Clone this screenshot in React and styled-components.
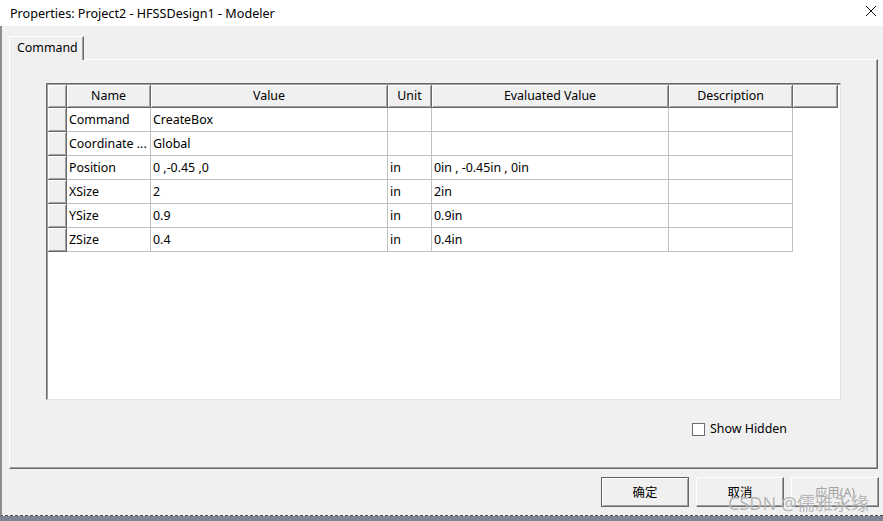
import React from 'react';
import styled, { createGlobalStyle } from 'styled-components';

const GlobalStyle = createGlobalStyle`
  html, body {
    margin: 0;
    padding: 0;
    background: #7d8594;
  }
  body {
    font-family: "Noto Sans", "Noto Sans CJK SC", sans-serif;
    font-size: 12.4px;
    color: #000;
  }
`;

const COLS = [19, 84, 237, 44, 237, 124];

const HEADERS = ['', 'Name', 'Value', 'Unit', 'Evaluated Value', 'Description'];

const ROWS = [
  ['Command', 'CreateBox', '', ''],
  ['Coordinate ...', 'Global', '', ''],
  ['Position', '0 ,-0.45 ,0', 'in', '0in , -0.45in , 0in'],
  ['XSize', '2', 'in', '2in'],
  ['YSize', '0.9', 'in', '0.9in'],
  ['ZSize', '0.4', 'in', '0.4in'],
];

const App = () => {
  return (
    <>
      <GlobalStyle />
      <Window>
        <TitleBar>
          <Title>Properties: Project2 - HFSSDesign1 - Modeler</Title>
          <CloseButton>
            <svg width="12" height="12" viewBox="0 0 12 12">
              <path d="M1 1 L11 11 M11 1 L1 11" stroke="#111" strokeWidth="1" fill="none" />
            </svg>
          </CloseButton>
        </TitleBar>
        <Body>
          <TabStrip>
            <Tab>Command</Tab>
          </TabStrip>
          <Panel>
            <Grid>
              <HeaderRow>
                {HEADERS.map((h, i) => (
                  <HeaderCell key={i} $w={COLS[i]}>{h}</HeaderCell>
                ))}
                <HeaderCell $w={45} />
              </HeaderRow>
              {ROWS.map((r, i) => (
                <Row key={i}>
                  <SelectorCell $w={COLS[0]} />
                  {r.map((v, j) => (
                    <Cell key={j} $w={COLS[j + 1]}>{v}</Cell>
                  ))}
                  <Cell $w={COLS[5]} />
                </Row>
              ))}
            </Grid>
            <OptionsRow>
              <CheckBox />
              <CheckLabel>Show Hidden</CheckLabel>
            </OptionsRow>
          </Panel>
          <ButtonRow>
            <Button $default>确定</Button>
            <Button>取消</Button>
            <Button $disabled>应用(A)</Button>
          </ButtonRow>
        </Body>
        <Watermark>CSDN @儒雅永缘</Watermark>
      </Window>
    </>
  );
};

export default App;

const Window = styled.div`
  position: relative;
  width: 883px;
  height: 521px;
  display: flex;
  flex-direction: column;
  overflow: hidden;
  background: #7d8594;
`;

const TitleBar = styled.div`
  height: 26px;
  flex: none;
  background: #fff;
  display: flex;
  align-items: center;
  justify-content: space-between;
  padding: 0 6px 0 10px;
`;

const Title = styled.div`
  font-size: 12.6px;
  color: #000;
`;

const CloseButton = styled.div`
  width: 12px;
  height: 12px;
  display: flex;
  margin-top: -4px;
`;

const Body = styled.div`
  height: 490px;
  flex: none;
  box-sizing: border-box;
  background: #f0f0f0;
  border-left: 2px solid #8e8e8e;
  border-bottom: 1px dashed #4a4f58;
  padding: 10px 5px 0 7px;
  display: flex;
  flex-direction: column;
`;

const TabStrip = styled.div`
  display: flex;
  height: 24px;
  margin-bottom: -1px;
`;

const Tab = styled.div`
  position: relative;
  z-index: 1;
  width: 75px;
  box-sizing: border-box;
  background: #f0f0f0;
  border-top: 1px solid #fff;
  border-left: 1px solid #fff;
  border-right: 1px solid #696969;
  box-shadow: inset -1px 0 #a0a0a0;
  padding: 2px 0 0 7px;
  line-height: 18px;
`;

const Panel = styled.div`
  height: 410px;
  box-sizing: border-box;
  border-top: 1px solid #fff;
  border-left: 1px solid #fff;
  border-right: 1px solid #696969;
  border-bottom: 1px solid #696969;
  box-shadow: inset -1px -1px #a0a0a0;
  padding: 23px 36px 0 36px;
  display: flex;
  flex-direction: column;
`;

const Grid = styled.div`
  height: 317px;
  box-sizing: border-box;
  background: #fff;
  border-top: 1px solid #696969;
  border-left: 1px solid #696969;
  border-right: 1px solid #e3e3e3;
  border-bottom: 1px solid #e3e3e3;
  box-shadow: inset 1px 1px #a0a0a0;
  padding: 1px 0 0 1px;
`;

const HeaderRow = styled.div`
  display: flex;
  height: 23px;
`;

const HeaderCell = styled.div`
  width: ${(p) => p.$w}px;
  flex: none;
  box-sizing: border-box;
  background: #f0f0f0;
  border-right: 1px solid #696969;
  border-bottom: 1px solid #696969;
  box-shadow: inset 1px 1px #fff, inset -1px -1px #a0a0a0;
  text-align: center;
  line-height: 21px;
`;

const Row = styled.div`
  display: flex;
  height: 24px;
`;

const SelectorCell = styled(HeaderCell)``;

const Cell = styled.div`
  width: ${(p) => p.$w}px;
  flex: none;
  box-sizing: border-box;
  border-right: 1px solid #c0c0c0;
  border-bottom: 1px solid #c0c0c0;
  padding-left: 2px;
  line-height: 23px;
  white-space: nowrap;
  overflow: hidden;
`;

const OptionsRow = styled.div`
  display: flex;
  align-items: center;
  justify-content: flex-end;
  gap: 5px;
  margin-top: 21px;
  padding-right: 54px;
`;

const CheckBox = styled.div`
  width: 13px;
  height: 13px;
  box-sizing: border-box;
  background: #fff;
  border: 1px solid #6d6d6d;
`;

const CheckLabel = styled.div`
  line-height: 16px;
`;

const ButtonRow = styled.div`
  display: flex;
  justify-content: flex-end;
  gap: 7px;
  padding-top: 8px;
  margin-right: -1px;
`;

const Button = styled.div`
  width: 88px;
  height: 30px;
  box-sizing: border-box;
  background: #f0f0f0;
  display: flex;
  align-items: center;
  justify-content: center;
  color: ${(p) => (p.$disabled ? '#a0a0a0' : '#000')};
  border: 1px solid ${(p) => (p.$default ? '#5e5e5e' : '#fff')};
  border-right-color: #696969;
  border-bottom-color: #696969;
  box-shadow: ${(p) =>
    p.$default
      ? 'inset 1px 1px #fff, inset -1px -1px #a0a0a0'
      : 'inset -1px -1px #a0a0a0'};
`;

const Watermark = styled.div`
  position: absolute;
  right: 14px;
  bottom: 6px;
  font-size: 18px;
  color: rgba(120, 120, 120, 0.55);
  text-shadow: 0 0 1px rgba(255, 255, 255, 0.9);
  pointer-events: none;
  white-space: nowrap;
`;
